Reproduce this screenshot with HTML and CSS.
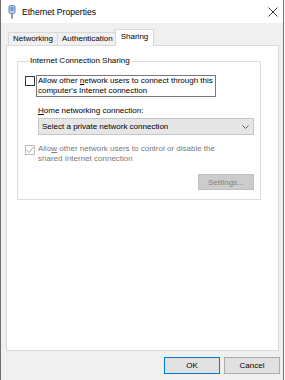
FILE: index.html
```html
<!DOCTYPE html>
<html lang="en">
<head>
    <meta charset="UTF-8">
    <title>Ethernet Properties</title>
    <link rel="stylesheet" href="styles.css">
</head>
<body>
    <div class="window">
        <div class="titlebar">
            <svg class="app-icon" width="8" height="14" viewBox="0 0 8 14">
                <rect x="1" y="0.5" width="6" height="8" rx="1.5" fill="#b9d3ee" stroke="#5f86ad"/>
                <rect x="2.5" y="2" width="3" height="4" fill="#6f9bc8"/>
                <rect x="3" y="8.5" width="2" height="5" fill="#8a96a3"/>
            </svg>
            <span class="title">Ethernet Properties</span>
            <svg class="close" width="10" height="10" viewBox="0 0 10 10">
                <path d="M0.5 0.5 L9.5 9.5 M9.5 0.5 L0.5 9.5" stroke="#333" stroke-width="1"/>
            </svg>
        </div>

        <div class="body">
            <div class="tabs">
                <div class="tab">Networking</div>
                <div class="tab">Authentication</div>
                <div class="tab active">Sharing</div>
            </div>

            <div class="panel">
                <fieldset class="group">
                    <legend>Internet Connection Sharing</legend>

                    <div class="check">
                        <span class="box"></span>
                        <span class="check-text focused">Allow other <u>n</u>etwork users to connect through this computer's Internet connection</span>
                    </div>

                    <div class="sub">
                        <div class="field-label"><u>H</u>ome networking connection:</div>
                        <div class="select">
                            <span>Select a private network connection</span>
                            <svg class="chevron" width="7" height="4" viewBox="0 0 7 4">
                                <path d="M0.5 0.5 L3.5 3.5 L6.5 0.5" fill="none" stroke="#606060" stroke-width="1"/>
                            </svg>
                        </div>
                    </div>

                    <div class="check disabled">
                        <span class="box">
                            <svg width="8" height="8" viewBox="0 0 8 8">
                                <path d="M0.5 4 L3 6.5 L7.5 1" fill="none" stroke="#a8a8a8" stroke-width="1"/>
                            </svg>
                        </span>
                        <span class="check-text">Allo<u>w</u> other network users to control or disable the shared Internet connection</span>
                    </div>

                    <div class="group-actions">
                        <button class="btn" disabled>Settings...</button>
                    </div>
                </fieldset>
            </div>

            <div class="footer">
                <button class="btn default">OK</button>
                <button class="btn">Cancel</button>
            </div>
        </div>
    </div>
</body>
</html>
```

FILE: styles.css
```css
body {
    margin: 0;
    background-color: #ffffff;
    font-family: 'Liberation Sans', Arial, sans-serif;
    font-size: 8px;
    color: #000;
}
u {
    text-decoration: underline;
    text-underline-offset: 1px;
}
.window {
    width: 284px;
    height: 380px;
    box-sizing: border-box;
    border-left: 1px solid #707070;
    border-right: 1px solid #707070;
    background-color: #f0f0f0;
    display: flex;
    flex-direction: column;
}
.titlebar {
    height: 23px;
    background-color: #ffffff;
    display: flex;
    align-items: center;
    padding: 0 5px 0 7px;
}
.app-icon {
    display: block;
}
.title {
    margin-left: 6px;
    font-size: 8.6px;
}
.close {
    margin-left: auto;
    display: block;
}
.body {
    padding: 6px 3px 0 5px;
}
.tabs {
    display: flex;
    align-items: flex-end;
    height: 16px;
    padding-left: 2px;
}
.tab {
    height: 13px;
    box-sizing: border-box;
    padding: 0 4px;
    border: 1px solid #d9d9d9;
    border-bottom: none;
    line-height: 12px;
    background-color: #f0f0f0;
    margin-left: -1px;
}
.tab:first-child {
    margin-left: 0;
}
.tab.active {
    height: 17px;
    margin: 0 -2px -1px -3px;
    padding: 0 5px;
    line-height: 13px;
    background-color: #fff;
    position: relative;
    z-index: 1;
}
.panel {
    width: 273px;
    height: 306px;
    box-sizing: border-box;
    border: 1px solid #d9d9d9;
    background-color: #fff;
    padding: 10px 0 0 10px;
}
.group {
    width: 243px;
    box-sizing: border-box;
    margin: 0;
    padding: 9px 6px 9px 7px;
    border: 1px solid #dcdcdc;
}
.group legend {
    padding: 0 1px;
    margin-left: 4px;
    line-height: 10px;
}
.check {
    display: flex;
    align-items: flex-start;
}
.box {
    width: 10px;
    height: 10px;
    box-sizing: border-box;
    border: 1px solid #333;
    background-color: #fff;
    margin-top: 1px;
    display: flex;
    align-items: center;
    justify-content: center;
}
.box svg {
    display: block;
}
.check-text {
    margin-left: 1px;
    padding: 0 1px;
    border: 1px solid transparent;
    line-height: 10px;
    width: 176px;
}
.check-text.focused {
    border-color: #7a7a7a;
}
.check.disabled {
    margin-top: 9px;
}
.check.disabled .box {
    border-color: #bcbcbc;
}
.check.disabled .check-text {
    color: #7a7a7a;
    border: none;
    padding: 0 2px;
    margin-top: 0;
    width: 200px;
}
.sub {
    margin: 9px 0 0 13px;
}
.field-label {
    line-height: 10px;
}
.select {
    width: 216px;
    height: 17px;
    box-sizing: border-box;
    margin-top: 2px;
    border: 1px solid #c6c6c6;
    background-color: #e6e6e6;
    display: flex;
    align-items: center;
    justify-content: space-between;
    padding: 0 4px 0 3px;
}
.chevron {
    display: block;
}
.group-actions {
    display: flex;
    justify-content: flex-end;
    margin-top: 10px;
}
.btn {
    width: 56px;
    height: 16px;
    box-sizing: border-box;
    padding: 0;
    border: 1px solid #adadad;
    background-color: #e1e1e1;
    font-family: inherit;
    font-size: 8px;
    color: #000;
}
.btn:disabled {
    border-color: #bfbfbf;
    background-color: #cccccc;
    color: #838383;
}
.footer {
    display: flex;
    justify-content: flex-end;
    gap: 4px;
    margin-top: 6px;
}
.footer .btn {
    height: 17px;
}
.btn.default {
    border-color: #0078d7;
}
```
